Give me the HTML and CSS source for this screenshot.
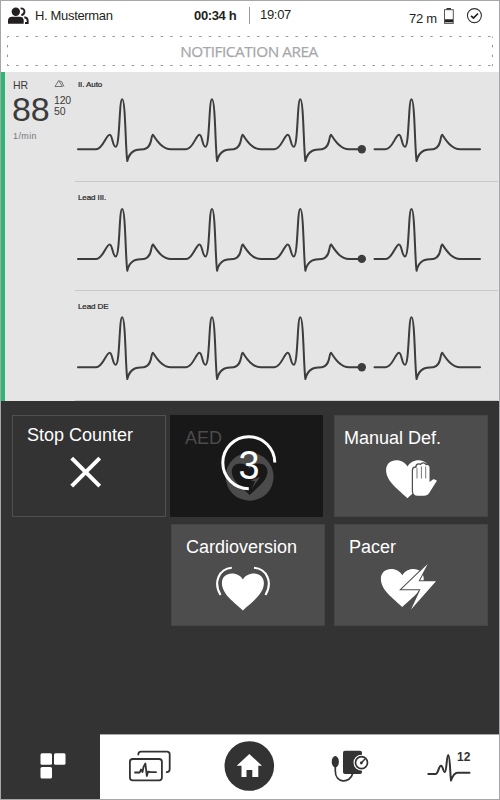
FILE: index.html
```html
<!DOCTYPE html>
<html lang="en">
<head>
<meta charset="utf-8">
<title>Patient monitor</title>
<link rel="stylesheet" href="styles.css">
</head>
<body>
<svg class="defs" width="0" height="0">
  <defs>
    <g id="trace" class="trace">
      <path d="M78 149.3H96C103 149.3 106 134.7 109.7 134.7C112.500 134.700 112.500 146.700 115.700 146.700C120 146.700 119 99.300 122.200 99.300C125.500 99.300 125.500 150 127.300 161C130 149.500 137 149.500 144 149.300C153 147.500 150.500 134.700 153 134.700C156.500 140 162 149.300 171 149.300H186C193 149.300 196 134.700 199.500 134.700C202.300 134.700 202.300 146.700 205.500 146.700C209.800 146.700 208.800 99.300 212 99.300C215.300 99.300 215.300 150 217.100 161C219.800 149.500 226.800 149.500 233.800 149.300C242.800 147.500 240.300 134.700 242.800 134.700C246.300 140 251.800 149.300 260.800 149.300H274.300C281.300 149.300 284.300 134.700 287.800 134.700C290.600 134.700 290.600 146.700 293.800 146.700C298.100 146.700 297.100 99.300 300.300 99.300C303.600 99.300 303.600 150 305.400 161C308.100 149.500 315.100 149.500 322.100 149.300C331.100 147.500 328.600 134.700 331.100 134.700C334.600 140 340.100 149.300 349.100 149.300H362"/>
      <path d="M374.500 149.300H385.500C392.500 149.300 395.500 134.700 399 134.700C401.800 134.700 401.800 146.700 405 146.700C409.300 146.700 408.300 99.300 411.500 99.300C414.800 99.300 414.800 150 416.600 161C419.300 149.500 426.300 149.500 433.300 149.300C442.300 147.500 439.800 134.700 442.300 134.700C445.800 140 451.300 149.300 460.300 149.300H480"/>
      <circle cx="361.800" cy="149.200" r="4.200"/>
    </g>
    <path id="heart" d="M0 37C-8 29-21 21-21 9.500C-21 3.500-16.500 0-11 0C-6 0-2 2.500 0 6C2 2.500 6 0 11 0C16.500 0 21 3.500 21 9.500C21 21 8 29 0 37Z"/>
  </defs>
</svg>
<div class="device">
  <header class="status">
    <svg class="people" width="34" height="35" viewBox="1 1 34 35">
      <circle cx="15.800" cy="11.700" r="4.200"/>
      <path d="M8 23.800V20.500Q8 16.700 12 16.700H19.700Q23.700 16.700 23.700 20.500V23.800Z"/>
      <path class="back" d="M20.600 8.400Q24.800 8.600 24.400 12Q24 14.700 21.300 15M24.300 17.300Q27.700 17.600 27.700 21V23H25"/>
    </svg>
    <span class="name">H. Musterman</span>
    <span class="elapsed">00:34 h</span>
    <span class="divider"></span>
    <span class="clock">19:07</span>
    <span class="distance">72 m</span>
    <svg width="58" height="35" viewBox="441 1 58 35">
      <rect x="447.500" y="8" width="4.500" height="2" fill="#333"/>
      <rect x="445.500" y="9.700" width="8.800" height="13.700" fill="none" stroke="#555"/>
      <rect x="446" y="19.300" width="8" height="3" fill="#231f20"/>
      <circle cx="475.400" cy="15.600" r="7" fill="none" stroke="#333" stroke-width="1.100"/>
      <path d="M472 15.800L474.500 18L479 13.500" fill="none" stroke="#222" stroke-width="1.700"/>
    </svg>
  </header>
  <div class="notice">
    <svg class="dots" width="488" height="32" viewBox="6 35 488 32">
      <path d="M7.700 36.500H493M7.700 65.500H493" stroke-dasharray="2.500 7.130" stroke-dashoffset="1.200"/>
      <path d="M7.500 36.500V66M492.500 36.500V66" stroke-dasharray="2.500 7.130" stroke-dashoffset="1.200"/>
    </svg>
    <span>NOTIFICATION AREA</span>
  </div>
  <main class="monitor">
    <section class="vitals">
      <div class="head"><span>HR</span>
        <svg width="12" height="10" viewBox="53 79 12 10"><path d="M54 86.500L57.700 80.500L61.500 86.500ZM58.500 81L60.500 81.500L63 86.500" fill="none" stroke="#555" stroke-width=".8"/></svg>
      </div>
      <div class="reading"><span class="rate">88</span><span class="limits">120<br>50</span></div>
      <div class="unit">1/min</div>
    </section>
    <section class="leads">
      <div class="lead"><span>II. Auto</span><svg width="423" height="91" viewBox="75 90 423 91"><use href="#trace"/></svg></div>
      <div class="lead second"><span>Lead III.</span><svg width="423" height="90" viewBox="75 90 423 90"><use href="#trace" y="-.3"/></svg></div>
      <div class="lead third"><span>Lead DE</span><svg width="423" height="92" viewBox="75 90 423 92"><use href="#trace"/></svg></div>
    </section>
  </main>
  <section class="actions">
    <div class="tile outline" role="button"><span>Stop Counter</span>
      <svg width="152" height="60" viewBox="13 445 152 60"><path d="M71.700 458.200L99.700 486.200M99.700 458.200L71.700 486.200" stroke="#fff" stroke-width="4"/></svg>
    </div>
    <div class="tile pending" role="button"><span>AED</span>
      <svg class="countdown" width="153" height="102" viewBox="170 415 153 102">
        <circle cx="249.600" cy="476.700" r="24" fill="#4b4b4b"/>
        <use href="#heart" transform="translate(249.600 463.500) scale(.85)" fill="#181818"/>
        <path d="M250.500 480.500L260 477L251.500 489L255 481.500Z" fill="#4b4b4b"/>
        <path d="M274.800 462.500A26 26 0 1 0 248.800 488.700" fill="none" stroke="#fff" stroke-width="3"/>
        <text x="249" y="479" textLength="21" lengthAdjust="spacingAndGlyphs" text-anchor="middle">3</text>
      </svg>
    </div>
    <div class="tile manual" role="button"><span>Manual Def.</span>
      <svg width="152" height="60" viewBox="335 448 152 60">
        <use href="#heart" transform="translate(407.500 460.200) scale(1.020 1.030)" fill="#fff"/>
        <path d="M413 491.500V470.500Q413 467.800 415 467.800L416.500 468V467Q416.500 464.500 418.800 464.500Q420.200 464.500 420.700 465.200Q421.500 463.500 423.200 463.500Q425.300 463.500 425.700 465.200Q429.500 464 429.500 467.500V482L433.300 479.200Q435.500 479 436.900 480.700L429.500 492.500Q427.500 495.800 424 495.800H417.500Q413.500 495.800 413 491.500Z" fill="#fff" stroke="#4d4d4d" stroke-width="2.400" paint-order="stroke"/>
        <path d="M417 468V478.500M421.400 466.500V478.500M425.700 466.500V478.500" stroke="#777" stroke-width="1"/>
      </svg>
    </div>
    <div class="tile cardio" role="button"><span>Cardioversion</span>
      <svg width="152" height="60" viewBox="172 557 152 60">
        <use href="#heart" transform="translate(242.900 573.500)" fill="#fff"/>
        <path d="M231.800 567.800C219 569 213 582 220.500 595M254 567.800C267 569 273 582 265.500 595" fill="none" stroke="#fff" stroke-width="2.100"/>
      </svg>
    </div>
    <div class="tile pacer" role="button"><span>Pacer</span>
      <svg width="152" height="60" viewBox="335 557 152 60">
        <use href="#heart" transform="translate(402.300 569) scale(1.020 1.030)" fill="#fff"/>
        <path d="M427.700 564L401.500 589.200H420.500L411 609.500L436 581.300H418.500Z" fill="#fff" stroke="#4d4d4d" stroke-width="2" paint-order="stroke"/>
      </svg>
    </div>
  </section>
  <nav class="tabs">
    <a class="active"><svg width="99" height="64" viewBox="1 735 99 64"><g fill="#fff"><rect x="40.500" y="753.300" width="11.500" height="11.500" rx="1.500"/><rect x="54" y="753.300" width="11.500" height="11.500" rx="1.500"/><rect x="40.500" y="767" width="11.500" height="11.500" rx="1.500"/></g></svg></a>
    <a><svg width="100" height="64" viewBox="100 735 100 64" class="line"><path d="M138.300 754.500Q138.300 751.600 141 751.600H167Q169.700 751.600 169.700 754.300V769Q169.700 772 166.700 772.200" stroke-width="1.800"/><rect x="129.900" y="759" width="32" height="21.300" rx="2.800" stroke-width="1.800"/><path d="M135 772.500H139.700L141 769.500L142.500 772L143.500 767L145.400 763.500L146.800 776L148.200 771.500L150 772.200H156" stroke-width="1.800"/></svg></a>
    <a><svg width="100" height="64" viewBox="200 735 100 64"><circle cx="249.300" cy="766" r="24.800" fill="#333"/><path d="M249.300 754L262 765.800H258.300V777H252.300V770H246.500V777H241.500V765.800H236.700Z" fill="#fff"/></svg></a>
    <a><svg width="100" height="64" viewBox="300 735 100 64"><rect x="343" y="750.700" width="19" height="23.300" rx="2" fill="#333"/><ellipse cx="335.300" cy="761.700" rx="3.600" ry="5.700" fill="#333"/><path d="M335.300 766V771C335.300 783.500 350 784 352.700 773.500" fill="none" stroke="#333" stroke-width="1.700"/><circle cx="361.500" cy="762.700" r="8" fill="#fff"/><circle cx="361.500" cy="762.700" r="6" fill="#fff" stroke="#333" stroke-width="1.700"/><path d="M361 763.300L365 759" stroke="#333" stroke-width="1.500"/><circle cx="361.300" cy="763" r="1.400" fill="#333"/></svg></a>
    <a><svg width="99" height="64" viewBox="400 735 99 64"><path class="line" d="M428.300 774H435.500C438.500 774 438.500 765.800 441 765.800C443 765.800 443 772 444.800 772C446.700 772 446.500 755 448.300 755C450 755 450 773 451 780.500C453 775 455 772.700 457.500 772.700H469.500" stroke-width="2"/><text x="457" y="761" class="twelve">12</text></svg></a>
  </nav>
</div>
</body>
</html>
```
FILE: styles.css
```css
* { box-sizing: border-box; }
body { margin: 0; font-family: "Liberation Sans", Arial, sans-serif; color: #231f20; }
svg { display: block; }
.defs { position: absolute; }
.device {
  width: 500px; height: 800px; border: 1px solid #a7a7a9; background: #fff;
  display: flex; flex-direction: column; overflow: hidden;
}
.status {
  height: 35px; flex: none; display: grid;
  grid-template-columns: 34px 159px 55px 1px 159px 31px 59px;
  align-items: start; font-size: 13px; line-height: 15px; white-space: nowrap;
}
.people { fill: #231f20; }
.people .back { fill: none; stroke: #231f20; stroke-width: 1.9; }
.name { padding-top: 7px; letter-spacing: -.33px; }
.elapsed { padding-top: 7px; font-weight: bold; letter-spacing: -.35px; }
.divider { height: 17px; margin-top: 6px; background: #999; }
.clock { padding: 6px 0 0 10px; letter-spacing: -.3px; }
.distance { padding-top: 10px; letter-spacing: -.3px; }
.notice {
  height: 36px; flex: none; position: relative; text-align: center;
  font: 15.300px/30px "Open Sans", "Noto Sans", sans-serif; letter-spacing: -.43px; color: #a7a7a9;
  padding-right: 2px; -webkit-text-stroke: .25px #a7a7a9;
}
.dots { position: absolute; left: 5px; top: -1px; fill: none; stroke: #97979b; stroke-width: 1; }
.monitor { height: 329px; flex: none; display: flex; background: #e5e5e5; }
.vitals { width: 74px; border-left: 4px solid #2bb673; color: #3b3b3b; padding: 7px 0 0 8px; }
.head { display: flex; justify-content: space-between; font-size: 10.500px; line-height: 12px; padding-right: 9px; }
.reading { display: flex; height: 36px; }
.rate { width: 42px; font-size: 34px; line-height: 36px; margin-left: -1px; letter-spacing: -.2px; }
.limits { font-size: 10.500px; line-height: 11px; padding-top: 4px; letter-spacing: -.2px; }
.unit { font-size: 9px; line-height: 12px; margin-top: 3px; color: #777; letter-spacing: .4px; }
.leads { width: 423px; }
.lead { height: 110px; border-bottom: 1px solid #c9c9c9; padding-top: 7px; }
.lead span { display: block; height: 11px; padding-left: 3px; font-size: 8px; line-height: 11px; letter-spacing: -.1px; color: #222; -webkit-text-stroke: .2px #222; }
.lead.second { height: 109px; padding-top: 10px; }
.lead.second svg { margin-top: -3px; }
.lead.third { height: 110px; padding-top: 10px; }
.lead.third svg { margin-top: -4px; }
.trace path { fill: none; stroke: #3d3d3d; stroke-width: 2; stroke-linecap: round; stroke-linejoin: round; }
.trace circle { fill: #3d3d3d; }
.actions {
  height: 333px; flex: none; background: #333; padding: 14px 0 0 11px; display: grid;
  grid-template-columns: 158px 164px 154px; grid-template-rows: 109px 102px; align-content: start;
}
.tile {
  width: 154px; height: 102px; border: 1px solid #464646; background: #4d4d4d; color: #fff;
  padding: 12px 0 0; position: relative; font-size: 18px; line-height: 20px;
}
.tile span { display: block; height: 20px; padding-left: 14px; }
.outline { background: #333; border-color: #505050; padding-top: 9px; }
.pending { width: 153px; border: 0; background: #181818; padding-top: 13px; color: #4b4b4b; }
.pending span { padding-left: 15px; }
.manual span { padding-left: 9px; }
.cardio { grid-column: 2; margin-left: 1px; }
.countdown { position: absolute; left: 0; top: 0; }
.countdown text { font-size: 41px; fill: #fff; }
.tabs { height: 65px; display: grid; grid-template-columns: 99px 100px 100px 100px 99px; border-top: 1px solid #aaa; }
.active { background: #333; margin-top: -1px; padding-top: 1px; }
.line { fill: none; stroke: #333; stroke-linecap: round; stroke-linejoin: round; }
.twelve { font-size: 12px; font-weight: bold; fill: #333; }
```
